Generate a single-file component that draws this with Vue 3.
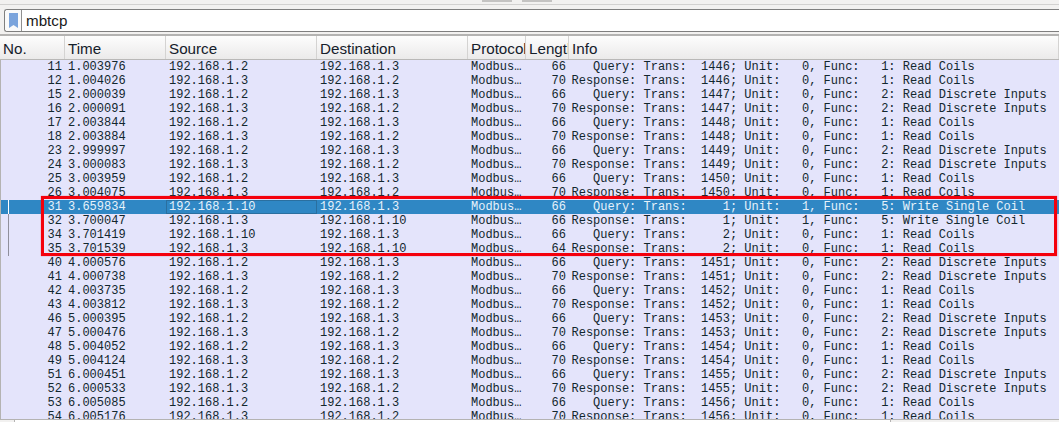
<script setup>
const columns = ['No.', 'Time', 'Source', 'Destination', 'Protocol', 'Length', 'Info']

const funcNames = { 1: 'Read Coils', 2: 'Read Discrete Inputs', 5: 'Write Single Coil' }

// no, time, last octet of source, last octet of destination, length, trans, unit, func
const raw = [
  [11, '1.003976', 2, 3, 66, 1446, 0, 1],
  [12, '1.004026', 3, 2, 70, 1446, 0, 1],
  [15, '2.000039', 2, 3, 66, 1447, 0, 2],
  [16, '2.000091', 3, 2, 70, 1447, 0, 2],
  [17, '2.003844', 2, 3, 66, 1448, 0, 1],
  [18, '2.003884', 3, 2, 70, 1448, 0, 1],
  [23, '2.999997', 2, 3, 66, 1449, 0, 2],
  [24, '3.000083', 3, 2, 70, 1449, 0, 2],
  [25, '3.003959', 2, 3, 66, 1450, 0, 1],
  [26, '3.004075', 3, 2, 70, 1450, 0, 1],
  [31, '3.659834', 10, 3, 66, 1, 1, 5],
  [32, '3.700047', 3, 10, 66, 1, 1, 5],
  [34, '3.701419', 10, 3, 66, 2, 0, 1],
  [35, '3.701539', 3, 10, 64, 2, 0, 1],
  [40, '4.000576', 2, 3, 66, 1451, 0, 2],
  [41, '4.000738', 3, 2, 70, 1451, 0, 2],
  [42, '4.003735', 2, 3, 66, 1452, 0, 1],
  [43, '4.003812', 3, 2, 70, 1452, 0, 1],
  [46, '5.000395', 2, 3, 66, 1453, 0, 2],
  [47, '5.000476', 3, 2, 70, 1453, 0, 2],
  [48, '5.004052', 2, 3, 66, 1454, 0, 1],
  [49, '5.004124', 3, 2, 70, 1454, 0, 1],
  [51, '6.000451', 2, 3, 66, 1455, 0, 2],
  [52, '6.000533', 3, 2, 70, 1455, 0, 2],
  [53, '6.005085', 2, 3, 66, 1456, 0, 1],
  [54, '6.005176', 3, 2, 70, 1456, 0, 1]
]

const packets = raw.map(([no, time, src, dst, len, trans, unit, func]) => {
  const kind = src === 2 || src === 10 ? '   Query:' : 'Response:'
  const info = `${kind} Trans: ${String(trans).padStart(5)}; Unit: ${String(unit).padStart(3)}, Func: ${String(func).padStart(3)}: ${funcNames[func]}`
  return {
    no,
    time,
    source: `192.168.1.${src}`,
    destination: `192.168.1.${dst}`,
    length: len,
    info,
    selected: no === 31
  }
})
</script>

<template>
  <div class="window">
    <div class="top-strip">
      <span class="stub"></span>
      <span class="stub"></span>
    </div>

    <div class="filter-bar">
      <div class="bookmark">
        <svg width="9" height="15" viewBox="0 0 9 15">
          <path d="M0 0H9V15L4.5 12L0 15Z" fill="#7ba4dc" />
        </svg>
      </div>
      <div class="filter-text">mbtcp</div>
    </div>

    <div class="packet-list">
      <div class="header row-grid">
        <div v-for="col in columns" :key="col" class="head-cell">{{ col }}</div>
      </div>

      <div class="rows">
        <div
          v-for="p in packets"
          :key="p.no"
          class="row row-grid"
          :class="{ selected: p.selected }"
        >
          <div class="cell right">{{ p.no }}</div>
          <div class="cell">{{ p.time }}</div>
          <div class="cell focus">{{ p.source }}</div>
          <div class="cell">{{ p.destination }}</div>
          <div class="cell">Modbus…</div>
          <div class="cell right">{{ p.length }}</div>
          <div class="cell info">{{ p.info }}</div>
        </div>

        <div class="rel-line"></div>
        <div class="sel-line"></div>
        <div class="red-box"></div>
      </div>
    </div>

    <div class="footer">
      <div class="footer-left"></div>
      <div class="footer-main"></div>
      <div class="footer-right"></div>
    </div>
  </div>
</template>

<style>
html,
body {
  margin: 0;
  background: #f2f1f0;
}
</style>

<style scoped>
.window {
  width: 1059px;
  height: 422px;
  display: flex;
  flex-direction: column;
  overflow: hidden;
  background: #f2f1f0;
  font-family: "Liberation Sans", Arial, sans-serif;
}

.top-strip {
  height: 5px;
  box-sizing: border-box;
  flex-shrink: 0;
  display: flex;
  align-items: flex-start;
  justify-content: center;
  gap: 10px;
  padding-right: 26px;
  border-bottom: 1px solid #d2d1d0;
}

.stub {
  width: 30px;
  height: 2px;
  background: #c4c3c2;
}

.filter-bar {
  height: 23px;
  flex-shrink: 0;
  box-sizing: border-box;
  margin: 4px 0 0 4px;
  display: flex;
  background: #fff;
  border: 1px solid #7f7f7f;
  border-right: none;
  border-radius: 3px 0 0 3px;
}

.bookmark {
  width: 17px;
  box-sizing: border-box;
  display: flex;
  align-items: center;
  justify-content: center;
  border-right: 1px solid #8f8f8f;
  background: #fafafa;
  border-radius: 3px 0 0 3px;
}

.filter-text {
  padding-left: 4px;
  font-size: 15.2px;
  line-height: 21px;
  color: #1a1a1a;
}

.packet-list {
  margin-top: 2px;
  flex: 1;
  min-height: 0;
  display: flex;
  flex-direction: column;
  border-top: 2px solid #b4b3b2;
}

.row-grid {
  display: grid;
  grid-template-columns: 65px 101px 151px 151px 58px 43px 1fr;
}

.header {
  height: 24px;
  box-sizing: border-box;
  flex-shrink: 0;
  background: linear-gradient(#fdfdfd, #ebeaea);
  border-bottom: 1px solid #b9b8b7;
}

.head-cell {
  padding: 1px 0 0 3px;
  font-size: 15.2px;
  line-height: 24px;
  color: #15202b;
  white-space: nowrap;
  overflow: hidden;
  border-right: 1px solid #d4d3d2;
}

.rows {
  position: relative;
  flex: 1;
  min-height: 0;
  overflow: hidden;
  background: #e4e4fb;
  border-left: 1px solid #b4b3b2;
}

.row {
  height: 14px;
  margin-left: -1px;
  font-family: "Liberation Mono", "Courier New", monospace;
  font-size: 12px;
  line-height: 14px;
  color: #12272e;
}

.cell {
  padding: 0 3px;
  box-sizing: border-box;
  white-space: pre;
  overflow: hidden;
}

.cell.right {
  text-align: right;
}

.cell.info {
  padding-left: 2.5px;
  overflow: visible;
}

.row.selected {
  background: #2f87c4;
  color: #e6f2fb;
}

.row.selected .focus {
  outline: 1px solid #2a6f9f;
  outline-offset: -1px;
}

.rel-line {
  position: absolute;
  left: 7px;
  top: 154px;
  width: 1px;
  height: 42px;
  background: #8f8f9c;
}

.sel-line {
  position: absolute;
  left: 7px;
  top: 140px;
  width: 1px;
  height: 14px;
  background: #fff;
}

.red-box {
  position: absolute;
  left: 40px;
  top: 136px;
  width: 1016px;
  height: 60px;
  box-sizing: border-box;
  border: 3px solid #f4000c;
  box-shadow: 0 0 1px rgba(244, 0, 12, 0.6);
}

.footer {
  height: 2px;
  flex-shrink: 0;
  display: flex;
  border-top: 1px solid #b4b3b2;
  box-sizing: content-box;
}

.footer-left {
  width: 14px;
  background: #f2f1f0;
  border-right: 1px solid #b4b3b2;
}

.footer-main {
  width: 875px;
  background: #fff;
}

.footer-right {
  flex: 1;
  background: #f2f1f0;
  border-left: 1px solid #b4b3b2;
}
</style>
